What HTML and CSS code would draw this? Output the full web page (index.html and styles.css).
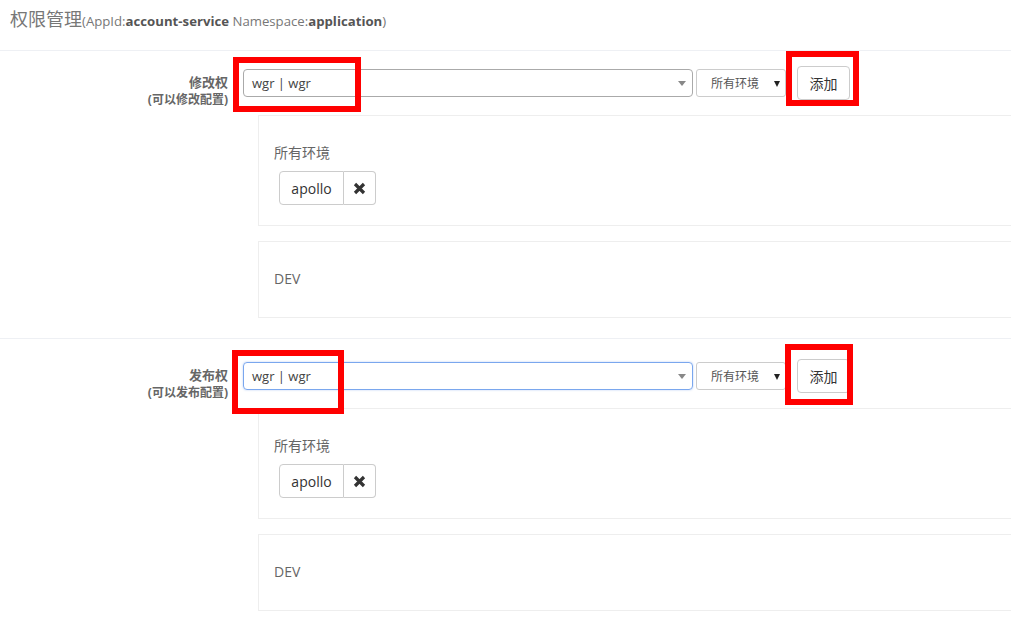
FILE: index.html
```html
<!DOCTYPE html>
<html lang="zh">
<head>
<meta charset="utf-8">
<title>权限管理</title>
<link rel="stylesheet" href="styles.css">
</head>
<body>
<div class="page">
  <header class="page-header">
    <span class="title">权限管理</span><span class="subtitle">(AppId:<b>account-service</b> Namespace:<b>application</b>)</span>
  </header>

  <section class="perm-section">
    <div class="perm-label">
      <div class="perm-name">修改权</div>
      <div class="perm-desc">(可以修改配置)</div>
    </div>
    <div class="perm-main">
      <div class="control-row">
        <div class="user-select"><span class="user-value">wgr | wgr</span><span class="s2-arrow"></span></div>
        <div class="env-select"><span>所有环境</span><span class="env-arrow"></span></div>
        <button class="btn-add">添加</button>
        <div class="mark mark-user-1"></div>
        <div class="mark mark-add-1"></div>
      </div>
      <div class="env-panel">
        <div class="env-title">所有环境</div>
        <div class="tag-group">
          <span class="tag-name">apollo</span>
          <span class="tag-remove"><svg width="13" height="13" viewBox="0 0 13 13"><path d="M2 2 L11 11 M11 2 L2 11" stroke="#333" stroke-width="3.2" stroke-linecap="butt"/></svg></span>
        </div>
      </div>
      <div class="env-panel">
        <div class="env-title">DEV</div>
      </div>
    </div>
  </section>

  <section class="perm-section">
    <div class="perm-label">
      <div class="perm-name">发布权</div>
      <div class="perm-desc">(可以发布配置)</div>
    </div>
    <div class="perm-main">
      <div class="control-row">
        <div class="user-select focused"><span class="user-value">wgr | wgr</span><span class="s2-arrow"></span></div>
        <div class="env-select"><span>所有环境</span><span class="env-arrow"></span></div>
        <button class="btn-add">添加</button>
        <div class="mark mark-user-2"></div>
        <div class="mark mark-add-2"></div>
      </div>
      <div class="env-panel">
        <div class="env-title">所有环境</div>
        <div class="tag-group">
          <span class="tag-name">apollo</span>
          <span class="tag-remove"><svg width="13" height="13" viewBox="0 0 13 13"><path d="M2 2 L11 11 M11 2 L2 11" stroke="#333" stroke-width="3.2" stroke-linecap="butt"/></svg></span>
        </div>
      </div>
      <div class="env-panel">
        <div class="env-title">DEV</div>
      </div>
    </div>
  </section>
</div>
</body>
</html>
```

FILE: styles.css
```css
* { box-sizing: border-box; }
html, body { margin: 0; padding: 0; background: #fff; overflow: hidden; }
body {
  font-family: "Open Sans", "Noto Sans CJK SC", sans-serif;
  color: #555;
  width: 1011px;
  height: 617px;
}
.page { width: 1011px; }

.page-header {
  height: 51px;
  padding: 9px 10px 0;
  border-bottom: 1px solid #eef0f4;
  line-height: 20px;
}
.title { font-size: 18px; color: #777; }
.subtitle { font-size: 13.2px; color: #777; }
.subtitle b { color: #555; font-weight: 700; }

.perm-section {
  display: flex;
  padding: 15px 0 20px 0;
  border-bottom: 1px solid #eef0f4;
}
.perm-section + .perm-section { padding-top: 20px; border-bottom: none; }

.perm-label {
  width: 228px;
  flex: none;
  text-align: right;
  padding-top: 7px;
  font-weight: 700;
  color: #666;
}
.perm-name { font-size: 13px; line-height: 18px; }
.perm-desc { font-size: 12px; line-height: 18px; }

.perm-main {
  flex: 1;
  margin-left: 15px;
  margin-right: -20px;
}

.control-row {
  position: relative;
  display: flex;
  align-items: flex-start;
  height: 34px;
}

.user-select {
  width: 450px;
  height: 28px;
  margin-top: 3px;
  border: 1px solid #aaa;
  border-radius: 4px;
  display: flex;
  align-items: center;
  padding-left: 8px;
  position: relative;
}
.user-select.focused {
  border-color: #7aa7ee;
  box-shadow: 0 0 2px rgba(102,150,233,0.5);
}
.user-value { font-size: 13px; color: #444; }
.s2-arrow {
  position: absolute;
  right: 6px;
  top: 11px;
  width: 0; height: 0;
  border-style: solid;
  border-width: 5px 4px 0 4px;
  border-color: #888 transparent transparent transparent;
}

.env-select {
  width: 90px;
  height: 28px;
  margin-top: 3px;
  margin-left: 3px;
  border: 1px solid #ccc;
  border-radius: 3px;
  display: flex;
  align-items: center;
  padding-left: 14px;
  font-size: 12px;
  color: #555;
  position: relative;
}
.env-arrow {
  position: absolute;
  right: 5px;
  top: 11px;
  width: 0; height: 0;
  border-style: solid;
  border-width: 6px 3.5px 0 3.5px;
  border-color: #222 transparent transparent transparent;
}

.btn-add {
  margin-left: 11px;
  width: 53px;
  height: 34px;
  border: 1px solid #ccc;
  border-radius: 4px;
  background: #fff;
  font-family: "Open Sans", "Noto Sans CJK SC", sans-serif;
  font-size: 14px;
  color: #333;
  padding: 0;
}

.mark {
  position: absolute;
  border: 6px solid #ff0000;
  pointer-events: none;
}
.mark-user-1 { left: -10px; top: -9px; width: 128px; height: 55px; }
.mark-add-1 { left: 543px; top: -15px; width: 73px; height: 55px; }
.mark-user-2 { left: -11px; top: -9px; width: 112px; height: 64px; }
.mark-add-2 { left: 542px; top: -15px; width: 68px; height: 61px; }

.env-panel {
  margin-left: 15px;
  margin-top: 15px;
  border: 1px solid #eee;
  padding: 27px 15px 20px;
}
.env-title {
  font-size: 14px;
  line-height: 20px;
  color: #666;
  margin-bottom: 8px;
}

.tag-group {
  display: inline-flex;
  margin-left: 5px;
  height: 34px;
}
.tag-name {
  display: flex;
  align-items: center;
  justify-content: center;
  width: 65px;
  border: 1px solid #ccc;
  border-radius: 4px 0 0 4px;
  font-size: 14px;
  color: #333;
}
.tag-remove {
  display: flex;
  align-items: center;
  justify-content: center;
  width: 32px;
  border: 1px solid #ccc;
  border-left: none;
  border-radius: 0 4px 4px 0;
}
```
